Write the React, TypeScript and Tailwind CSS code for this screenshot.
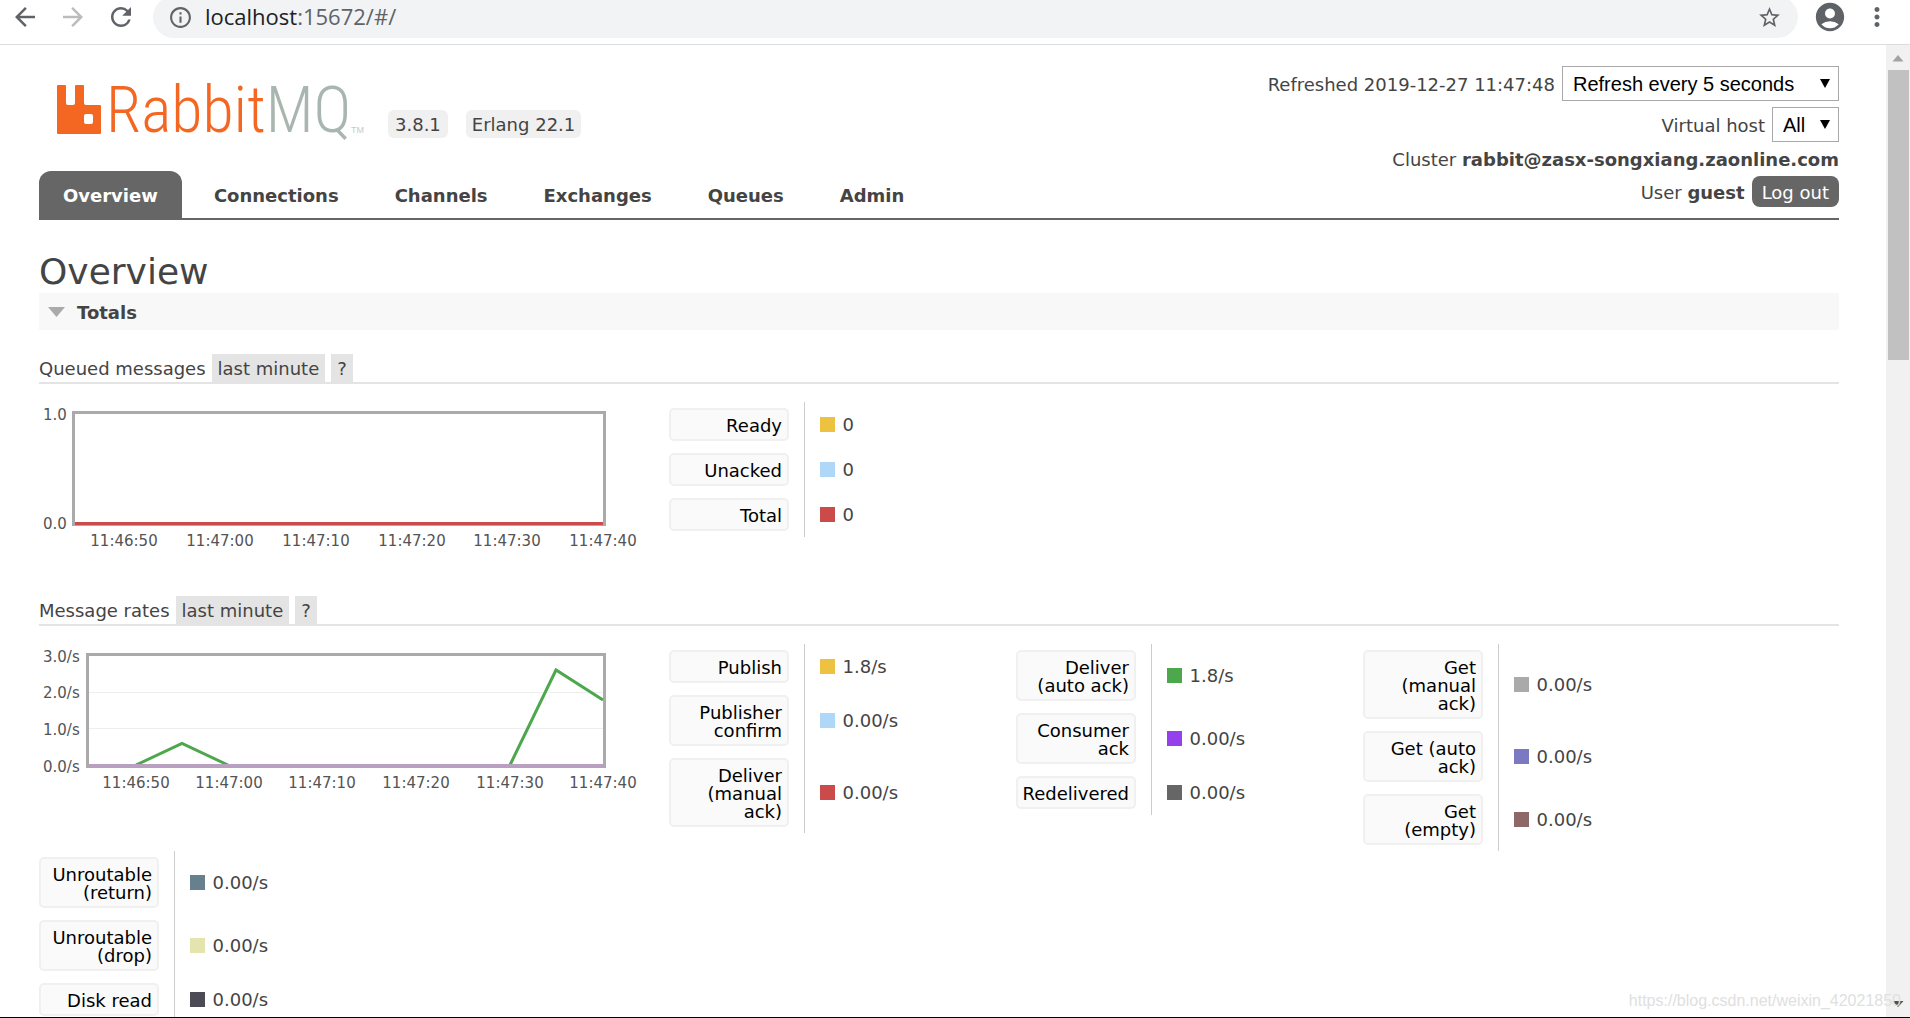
import React from 'react';
import {
  MdAccountCircle,
  MdArrowBack,
  MdArrowForward,
  MdInfoOutline,
  MdMoreVert,
  MdRefresh,
  MdStarBorder,
} from 'react-icons/md';

type Stat = { label: string; value: string; color: string };

const tabs = ['Overview', 'Connections', 'Channels', 'Exchanges', 'Queues', 'Admin'];

const queued: Stat[] = [
  { label: 'Ready', value: '0', color: '#edc240' },
  { label: 'Unacked', value: '0', color: '#afd8f8' },
  { label: 'Total', value: '0', color: '#cb4b4b' },
];

// one table per group of three, they wrap when the row is full
const rates: Stat[][] = [
  [
    { label: 'Publish', value: '1.8/s', color: '#edc240' },
    { label: 'Publisher\nconfirm', value: '0.00/s', color: '#afd8f8' },
    { label: 'Deliver\n(manual\nack)', value: '0.00/s', color: '#cb4b4b' },
  ],
  [
    { label: 'Deliver\n(auto ack)', value: '1.8/s', color: '#4da74d' },
    { label: 'Consumer\nack', value: '0.00/s', color: '#9440ed' },
    { label: 'Redelivered', value: '0.00/s', color: '#666666' },
  ],
  [
    { label: 'Get\n(manual\nack)', value: '0.00/s', color: '#aaaaaa' },
    { label: 'Get (auto\nack)', value: '0.00/s', color: '#7c79c3' },
    { label: 'Get\n(empty)', value: '0.00/s', color: '#8e6767' },
  ],
  [
    { label: 'Unroutable\n(return)', value: '0.00/s', color: '#67808d' },
    { label: 'Unroutable\n(drop)', value: '0.00/s', color: '#e5e4ae' },
    { label: 'Disk read', value: '0.00/s', color: '#4b4a55' },
  ],
];

const times = ['11:46:50', '11:47:00', '11:47:10', '11:47:20', '11:47:30', '11:47:40'];

const BrowserBar = () => (
  <div className="shrink-0 h-[45px] border-b border-[#dadce0] bg-white overflow-hidden">
    <div className="flex items-center h-[42px] -mt-1 pl-2.5 pr-[18px] text-[#5f6368]">
      <div className="flex gap-[18px]">
        <button aria-label="Back"><MdArrowBack size={30} /></button>
        <button aria-label="Forward" className="text-[#babcbe]"><MdArrowForward size={30} /></button>
        <button aria-label="Reload"><MdRefresh size={30} /></button>
      </div>
      <div className="flex flex-1 items-center h-full ml-[17px] pl-[15px] pr-4 rounded-full bg-[#f1f3f4]">
        <MdInfoOutline size={25} />
        <div className="flex-1 ml-3 pb-0.5 font-['Open_Sans',sans-serif] text-[22px] leading-7">
          <span className="text-[#202124]">localhost</span>:15672/#/
        </div>
        <button aria-label="Bookmark"><MdStarBorder size={25} /></button>
      </div>
      <button aria-label="Profile" className="ml-[15px]"><MdAccountCircle size={34} /></button>
      <button aria-label="Menu" className="ml-[15px]"><MdMoreVert size={30} /></button>
    </div>
  </div>
);

const Logo = () => (
  <a href="#/" aria-label="RabbitMQ" className="flex items-end w-[306px] h-[54px]">
    <svg width="45" height="49" viewBox="0 0 45 49" className="shrink-0">
      <path
        fill="#f46722"
        fillRule="evenodd"
        d="M1 0h7q1 0 1 1v17q0 2 2 2h5q2 0 2-2V1q0-1 1-1h7q1 0 1 1v17q0 2 2 2h14q1 0 1 1v27q0 1-1 1H1q-1 0-1-1V1q0-1 1-1zM29 29q-2 0-2 2v6q0 2 2 2h5q2 0 2-2v-6q0-2-2-2z"
      />
    </svg>
    <svg width="261" height="54" viewBox="0 0 261 54" className="shrink-0 overflow-visible">
      <text x="4" y="52" fill="#f46722" fontSize="64" fontFamily="'Liberation Sans Narrow', 'Roboto Condensed', 'Lato'" fontWeight="300">
        Rabbit<tspan fill="#a9b6b0">MQ</tspan>
      </text>
      <text x="249" y="53" fill="#c4ccc8" fontSize="9" fontFamily="'Liberation Sans'">TM</text>
    </svg>
  </a>
);

const Select = ({ id, label, width }: { id: string; label: string; width: string }) => (
  <span className={`relative inline-flex items-center ${width}`}>
    <select
      id={id}
      className="appearance-none w-full h-[35px] pl-2.5 border border-[#a9a9a9] bg-white text-black font-['Liberation_Sans',sans-serif] text-[20px] leading-6"
    >
      <option>{label}</option>
    </select>
    <svg width="10" height="9" viewBox="0 0 10 9" className="absolute right-[9px] pointer-events-none">
      <path d="M0 0h10L5 9z" />
    </svg>
  </span>
);

const Header = () => (
  <header className="flex justify-between border-b-2 border-[#666]">
    <div className="flex flex-col justify-end">
      <div className="flex items-end gap-[18px] pl-[18px] mb-[33px]">
        <div className="mb-1 w-[313px]"><Logo /></div>
        <span className="h-7 px-[7px] rounded-md bg-[#f0f0f0] leading-[30px]">3.8.1</span>
        <span className="h-7 px-1.5 rounded-md bg-[#f0f0f0] leading-[30px]">Erlang 22.1</span>
      </div>
      <nav className="flex gap-2 font-bold">
        {tabs.map((tab, i) => (
          <a
            key={tab}
            href="#/"
            className={
              i === 0
                ? 'h-[47px] px-6 rounded-t-[12px] bg-[#666] text-white leading-[50px]'
                : 'h-[47px] px-6 leading-[50px]'
            }
          >
            {tab}
          </a>
        ))}
      </nav>
    </div>

    <div className="flex flex-col items-end pt-[21px] pb-[11px]">
      <div className="flex items-center gap-[7px] mb-1.5">
        <label htmlFor="refresh" className="pt-0.5">Refreshed 2019-12-27 11:47:48</label>
        <Select id="refresh" label="Refresh every 5 seconds" width="w-[277px]" />
      </div>
      <div className="flex items-center gap-[7px]">
        <label htmlFor="vhost" className="pt-0.5">Virtual host</label>
        <Select id="vhost" label="All" width="w-[67px]" />
      </div>
      <p className="h-[34px] leading-[36px]">Cluster <b>rabbit@zasx-songxiang.zaonline.com</b></p>
      <div className="flex items-center gap-[7px]">
        <span className="pt-0.5">User <b>guest</b></span>
        <button className="h-[31px] px-2.5 pt-0.5 rounded-lg bg-[#666] text-white">Log out</button>
      </div>
    </div>
  </header>
);

const SectionTitle = ({ children }: { children: React.ReactNode }) => (
  <h3 className="flex h-[30px] gap-1.5 border-b-2 border-[#e4e4e4] leading-[30px]">
    {children}
    <button className="px-1.5 bg-[#e4e4e4]">last minute</button>
    <button className="px-1.5 bg-[#e4e4e4]">?</button>
  </h3>
);

const StatTable = ({ stats }: { stats: Stat[] }) => (
  <table className="w-[347px] border-collapse">
    <tbody>
      {stats.map((s) => (
        <tr key={s.label}>
          <th className="w-[135px] py-1.5 font-normal text-left">
            <button className="block w-[120px] pt-[7px] pb-1 pl-0.5 pr-[5px] rounded-[5px] border-2 border-[#f0f0f0] bg-[#fafafa] text-black text-right leading-[18px] whitespace-pre-line">
              {s.label}
            </button>
          </th>
          <td className="border-l border-[#ccc] pl-[15px]">
            <div className="flex items-center gap-2">
              <span className="size-[15px]" style={{ backgroundColor: s.color }} />
              {s.value}
            </div>
          </td>
        </tr>
      ))}
    </tbody>
  </table>
);

type ChartProps = {
  left: number;
  labels: { text: string; y: number }[];
  timeX: number[];
  children: React.ReactNode;
};

const Chart = ({ left, labels, timeX, children }: ChartProps) => (
  <svg width="630" height="149" viewBox="0 0 630 149" className="shrink-0 overflow-visible" fontSize="15" fill="#545454">
    <rect x={left + 1.5} y="10.5" width={564 - left} height="112" fill="#fff" stroke="#aaa" strokeWidth="3" />
    {children}
    {labels.map((l) => (
      <text key={l.text} x="4" y={l.y}>{l.text}</text>
    ))}
    {times.map((t, i) => (
      <text key={t} x={timeX[i]} y="144" textAnchor="middle">{t}</text>
    ))}
  </svg>
);

const Scrollbar = () => (
  <div className="flex flex-col items-center shrink-0 w-6 bg-[#f1f1f1]">
    <svg width="12" height="25" viewBox="0 0 12 25"><path d="M0.500 16.500h11L6 10z" fill="#a3a3a3" /></svg>
    <div className="w-[21px] h-[290px] bg-[#c1c1c1]" />
    <svg width="12" height="24" viewBox="0 0 12 24" className="mt-auto"><path d="M0.500 8h11L6 14z" fill="#505050" /></svg>
  </div>
);

const Watermarks = () => (
  <div
    aria-hidden="true"
    className="absolute left-[34px] top-[-60px] grid grid-cols-[repeat(4,455px)] auto-rows-[216px] pointer-events-none text-black/2 text-[15px] leading-5 font-['Noto_Sans','Noto_Sans_CJK_SC',sans-serif]"
  >
    {Array.from({ length: 20 }, (_, i) => (
      <div key={i} className="flex items-center justify-center">
        <span className="-rotate-[33deg] text-center">众安科技<br />16345947</span>
      </div>
    ))}
  </div>
);

export default function App() {
  return (
    <div className="relative flex flex-col h-screen overflow-hidden border-b border-black bg-white text-[#444] font-['DejaVu_Sans',sans-serif] text-[18px] leading-[22px]">
      <BrowserBar />
      <div className="flex flex-1 min-h-0">
        <main className="flex-1 min-w-0 overflow-hidden pl-[39px] pr-[47px]">
          <Header />
          <h1 className="mt-[31px] text-[36px] leading-[42px]">Overview</h1>
          <h2 className="flex items-center gap-3 h-[37px] mb-6 pl-[9px] bg-[#f8f8f8] font-bold">
            <svg width="17" height="10" viewBox="0 0 17 10"><path d="M0 0h17L8.500 10z" fill="#aaa" /></svg>
            <span className="pt-0.5">Totals</span>
          </h2>

          <section className="mb-[45px]">
            <SectionTitle>Queued messages</SectionTitle>
            <div className="flex flex-wrap items-start pt-[18px]">
              <Chart
                left={33}
                labels={[{ text: '1.0', y: 18 }, { text: '0.0', y: 127 }]}
                timeX={[85, 181, 277, 373, 468, 564]}
              >
                <path d="M36 121.500H564" stroke="#cb4b4b" strokeWidth="3" />
              </Chart>
              <StatTable stats={queued} />
            </div>
          </section>

          <section>
            <SectionTitle>Message rates</SectionTitle>
            <div className="flex flex-wrap items-start pt-[18px]">
              <Chart
                left={47}
                labels={[
                  { text: '3.0/s', y: 18 },
                  { text: '2.0/s', y: 54 },
                  { text: '1.0/s', y: 91 },
                  { text: '0.0/s', y: 128 },
                ]}
                timeX={[97, 190, 283, 377, 471, 564]}
              >
                <path d="M50 48.500H564M50 84.500H564" stroke="#eee" strokeWidth="1" />
                <path d="M97 121L143 99.500L189 121M471 121L517 26L564 56" fill="none" stroke="#4da74d" strokeWidth="3" />
                <path d="M50 121.500H564" stroke="#b9a0c0" strokeWidth="3" />
              </Chart>
              {rates.map((group) => (
                <StatTable key={group[0].label} stats={group} />
              ))}
            </div>
          </section>
        </main>
        <Scrollbar />
      </div>
      <Watermarks />
      <span className="absolute right-[9px] bottom-0 text-[#e0e0e0] font-['Liberation_Sans',sans-serif] text-[16px] leading-8">
        https://blog.csdn.net/weixin_42021850
      </span>
    </div>
  );
}
